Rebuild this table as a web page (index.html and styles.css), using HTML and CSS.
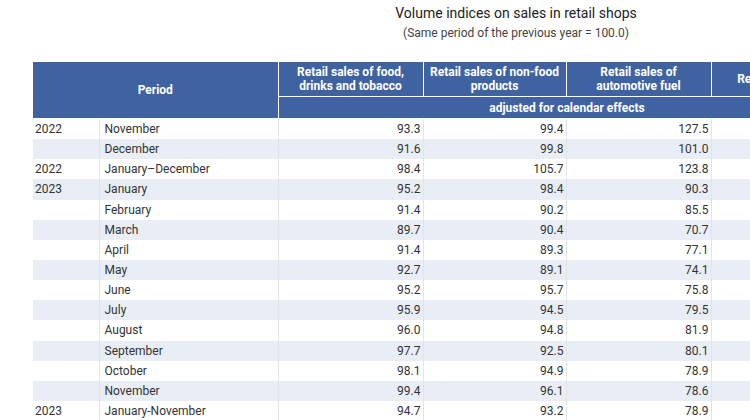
FILE: index.html
```html
<!DOCTYPE html>
<html lang="en">
<head>
<meta charset="utf-8">
<title>Volume indices on sales in retail shops</title>
<link rel="stylesheet" href="styles.css">
</head>
<body>
<div class="page">
  <h1 class="title">Volume indices on sales in retail shops</h1>
  <p class="subtitle">(Same period of the previous year = 100.0)</p>
  <table class="data">
    <colgroup>
      <col class="c-year"><col class="c-month"><col class="c-wide"><col class="c-narrow"><col class="c-wide"><col class="c-wide"><col class="c-last">
    </colgroup>
    <thead>
      <tr class="h1">
        <th colspan="2" rowspan="2">Period</th>
        <th>Retail sales of food, drinks and tobacco</th>
        <th>Retail sales of non&#8209;food products</th>
        <th>Retail sales of automotive fuel</th>
        <th>Retail sales, total</th>
        <th rowspan="2">Retail sales, total, unadjusted</th>
      </tr>
      <tr class="h2">
        <th colspan="4">adjusted for calendar effects</th>
      </tr>
    </thead>
    <tbody>
      <tr><td>2022</td><td>November</td><td>93.3</td><td>99.4</td><td>127.5</td><td>98.6</td><td>98.4</td></tr>
      <tr><td></td><td>December</td><td>91.6</td><td>99.8</td><td>101.0</td><td>95.4</td><td>95.1</td></tr>
      <tr><td>2022</td><td>January–December</td><td>98.4</td><td>105.7</td><td>123.8</td><td>103.5</td><td>103.5</td></tr>
      <tr><td>2023</td><td>January</td><td>95.2</td><td>98.4</td><td>90.3</td><td>95.9</td><td>95.9</td></tr>
      <tr><td></td><td>February</td><td>91.4</td><td>90.2</td><td>85.5</td><td>90.2</td><td>90.2</td></tr>
      <tr><td></td><td>March</td><td>89.7</td><td>90.4</td><td>70.7</td><td>86.6</td><td>87.1</td></tr>
      <tr><td></td><td>April</td><td>91.4</td><td>89.3</td><td>77.1</td><td>88.2</td><td>86.9</td></tr>
      <tr><td></td><td>May</td><td>92.7</td><td>89.1</td><td>74.1</td><td>88.5</td><td>89.0</td></tr>
      <tr><td></td><td>June</td><td>95.2</td><td>95.7</td><td>75.8</td><td>92.1</td><td>92.4</td></tr>
      <tr><td></td><td>July</td><td>95.9</td><td>94.5</td><td>79.5</td><td>92.6</td><td>92.2</td></tr>
      <tr><td></td><td>August</td><td>96.0</td><td>94.8</td><td>81.9</td><td>93.2</td><td>93.5</td></tr>
      <tr><td></td><td>September</td><td>97.7</td><td>92.5</td><td>80.1</td><td>93.2</td><td>92.6</td></tr>
      <tr><td></td><td>October</td><td>98.1</td><td>94.9</td><td>78.9</td><td>94.0</td><td>94.3</td></tr>
      <tr><td></td><td>November</td><td>99.4</td><td>96.1</td><td>78.6</td><td>95.1</td><td>94.8</td></tr>
      <tr><td>2023</td><td>January-November</td><td>94.7</td><td>93.2</td><td>78.9</td><td>91.8</td><td>91.8</td></tr>
    </tbody>
  </table>
</div>
</body>
</html>
```
FILE: styles.css
```css
html, body {
  margin: 0;
  padding: 0;
  background: #ffffff;
  overflow: hidden;
}

body {
  font-family: Roboto, "Liberation Sans", Arial, sans-serif;
  color: #333333;
}

.page {
  width: 966px;
  padding-left: 33px;
}

.title {
  margin: 4px 0 0;
  font-size: 14px;
  line-height: 18px;
  font-weight: 400;
  color: #222222;
  text-align: center;
}

.subtitle {
  margin: 4px 0 0;
  font-size: 12px;
  line-height: 14px;
  color: #444444;
  text-align: center;
}

.data {
  margin-top: 22px;
  width: 966px;
  table-layout: fixed;
  border-collapse: collapse;
  font-size: 12px;
}

.c-year { width: 66px; }
.c-month { width: 179px; }
.c-wide { width: 145px; }
.c-narrow { width: 143px; }
.c-last { width: 143px; }

.data th {
  background: #3f62a0;
  color: #ffffff;
  font-weight: 700;
  text-align: center;
  border: 1px solid #ffffff;
  border-top: 0;
  padding: 0 3px;
  line-height: 14px;
}

.data thead tr:first-child th:first-child {
  border-left: 0;
}

.data .h1 th {
  height: 34px;
}

.data .h2 th {
  height: 21px;
  padding: 0;
}

.data td {
  height: 20.14px;
  padding: 0 2px 0 3px;
  line-height: 20.14px;
  border-right: 1px solid #e4e4e4;
  text-align: right;
  white-space: nowrap;
}

.data td:first-child {
  text-align: left;
  padding-left: 2px;
}

.data td:nth-child(2) {
  text-align: left;
  padding-left: 5px;
}

.data tbody tr:nth-child(even) td {
  background: #e9eef6;
}
```
